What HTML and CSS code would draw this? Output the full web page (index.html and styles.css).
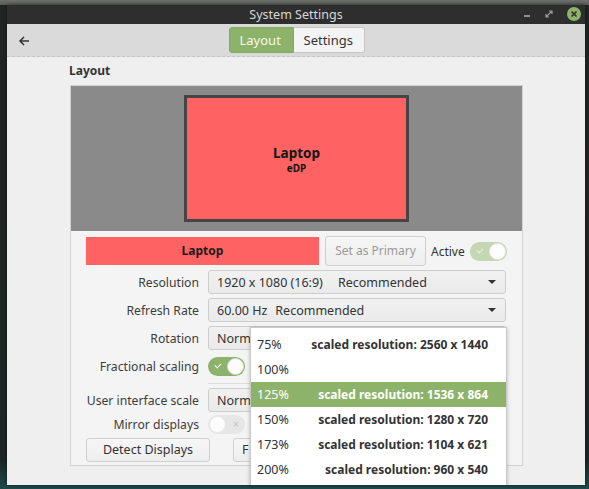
FILE: index.html
```html
<!DOCTYPE html>
<html lang="en">
<head>
    <meta charset="UTF-8">
    <title>System Settings</title>
    <link rel="stylesheet" href="styles.css">
</head>
<body>
    <div class="window">
        <div class="titlebar">
            <span class="title">System Settings</span>
            <div class="controls">
                <svg width="10" height="10" viewBox="0 0 10 10"><path d="M2 7h6" stroke="#b5b5b5" stroke-width="1.5"/></svg>
                <svg width="10" height="10" viewBox="0 0 10 10"><path d="M2 8l6-6M5 2h3v3M2 5v3h3" stroke="#9a9a9a" stroke-width="1.2" fill="none"/></svg>
                <svg width="16" height="16" viewBox="0 0 16 16"><circle cx="8" cy="8" r="7" fill="#8db36a"/><path d="M5.5 5.5l5 5M10.5 5.5l-5 5" stroke="#2d2d2d" stroke-width="1.6"/></svg>
            </div>
        </div>

        <div class="toolbar">
            <span class="back">
                <svg width="12" height="12" viewBox="0 0 12 12"><path d="M11 6H2M6 2L2 6l4 4" stroke="#333" stroke-width="1.5" fill="none"/></svg>
            </span>
            <div class="switcher">
                <span class="tab active">Layout</span>
                <span class="tab">Settings</span>
            </div>
        </div>

        <div class="content">
            <div class="heading">Layout</div>
            <div class="frame">
                <div class="canvas">
                    <div class="monitor">
                        <span class="mon-name">Laptop</span>
                        <span class="mon-port">eDP</span>
                    </div>
                </div>

                <div class="panel">
                    <div class="top-row">
                        <div class="name-bar">Laptop</div>
                        <span class="btn primary-btn">Set as Primary</span>
                        <span class="active-label">Active</span>
                        <span class="switch on dim"><span class="knob"></span></span>
                    </div>

                    <div class="row">
                        <span class="label">Resolution</span>
                        <div class="combo"><span>1920 x 1080 (16:9)</span><span class="rec wide">Recommended</span></div>
                    </div>
                    <div class="row">
                        <span class="label">Refresh Rate</span>
                        <div class="combo"><span>60.00 Hz</span><span class="rec">Recommended</span></div>
                    </div>
                    <div class="row">
                        <span class="label">Rotation</span>
                        <div class="combo"><span>Norm.</span></div>
                    </div>
                    <div class="row">
                        <span class="label">Fractional scaling</span>
                        <span class="switch on"><span class="knob"></span></span>
                    </div>
                    <div class="row sep-row">
                        <span class="label"></span>
                        <div class="separator"></div>
                    </div>
                    <div class="row">
                        <span class="label">User interface scale</span>
                        <div class="combo"><span>Norm.</span></div>
                    </div>
                    <div class="row short">
                        <span class="label">Mirror displays</span>
                        <span class="switch off"><span class="knob"></span></span>
                    </div>
                    <div class="buttons">
                        <span class="btn detect">Detect Displays</span>
                        <span class="btn fixed">F</span>
                    </div>
                </div>
            </div>
        </div>

        <ul class="menu">
            <li><span>75%</span><b>scaled resolution: 2560 x 1440</b></li>
            <li><span>100%</span></li>
            <li class="selected"><span>125%</span><b>scaled resolution: 1536 x 864</b></li>
            <li><span>150%</span><b>scaled resolution: 1280 x 720</b></li>
            <li><span>173%</span><b>scaled resolution: 1104 x 621</b></li>
            <li><span>200%</span><b>scaled resolution: 960 x 540</b></li>
        </ul>
    </div>
</body>
</html>
```

FILE: styles.css
```css
body {
    margin: 0;
    width: 589px;
    height: 489px;
    overflow: hidden;
    font-family: "Noto Sans", "DejaVu Sans", sans-serif;
    font-size: 12px;
    color: #3a3a3a;
    background: linear-gradient(to bottom, #6f716e 0, #5a5c59 5px, #202624 5px, #1c2725 460px, #1f4a4c 100%);
}

.window {
    position: relative;
    margin: 5px 0 0 7px;
    width: 578px;
    height: 480px;
    background-color: #efefef;
    box-shadow: 0 0 4px rgba(0, 0, 0, 0.5);
    overflow: hidden;
}

.titlebar {
    height: 19px;
    background-color: #2e2e2e;
    color: #d8d8d8;
    font-size: 12.5px;
    display: flex;
    align-items: center;
    justify-content: center;
    position: relative;
}

.controls {
    position: absolute;
    right: 3px;
    top: 1px;
    display: flex;
    align-items: center;
    gap: 12px;
}

.toolbar {
    height: 32px;
    background-color: #dadada;
    border-bottom: 1px dashed #c4c4c4;
    display: flex;
    align-items: center;
    justify-content: center;
    position: relative;
}

.back {
    position: absolute;
    left: 11px;
    top: 10px;
}

.switcher {
    display: flex;
    margin-left: 1px;
}

.tab {
    height: 24px;
    line-height: 24px;
    padding: 0 10px;
    font-size: 13px;
    border: 1px solid #c8c8c8;
    background-color: #f4f4f4;
    color: #333;
}

.tab.active {
    background-color: #8db36a;
    border-color: #84a962;
    color: #f5f9f0;
    border-radius: 3px 0 0 3px;
    width: 43px;
}

.tab:last-child {
    border-left: none;
    border-radius: 0 3px 3px 0;
    width: 50px;
}

.content {
    padding: 6px 62px 0 63px;
}

.heading {
    font-weight: bold;
    font-size: 12px;
    color: #333;
    line-height: 16px;
    margin-left: -1px;
}

.frame {
    margin-top: 6px;
    width: 451px;
    border: 1px solid #d2d2d2;
    background-color: #f4f4f4;
}

.canvas {
    height: 145px;
    background-color: #8a8a8a;
    display: flex;
    align-items: center;
    justify-content: center;
}

.monitor {
    width: 219px;
    height: 121px;
    border: 3px solid #454545;
    background-color: #fe6262;
    display: flex;
    flex-direction: column;
    align-items: center;
    justify-content: center;
    color: #151515;
    font-weight: bold;
}

.mon-name {
    display: block;
    font-size: 13.5px;
    line-height: 18px;
    margin-top: 2px;
}

.mon-port {
    display: block;
    font-size: 10px;
    line-height: 13px;
}

.panel {
    padding: 5px 15px 3px 15px;
}

.top-row {
    display: flex;
    align-items: center;
    height: 30px;
}

.name-bar {
    width: 233px;
    height: 28px;
    line-height: 28px;
    background-color: #fe6262;
    text-align: center;
    font-weight: bold;
    color: #1c1c1c;
}

.btn {
    display: inline-block;
    box-sizing: border-box;
    border: 1px solid #cfcfcf;
    border-radius: 3px;
    background: linear-gradient(#f6f6f6, #eeeeee);
    text-align: center;
}

.primary-btn {
    width: 101px;
    height: 30px;
    line-height: 28px;
    margin-left: 6px;
    color: #9a9a9a;
}

.active-label {
    margin-left: 5px;
    color: #333;
}

.switch {
    position: relative;
    display: inline-block;
    width: 37px;
    height: 19px;
    border-radius: 10px;
    box-sizing: border-box;
}

.top-row .switch {
    margin-left: 5px;
}

.switch.on {
    background-color: #8db36a;
}

.switch.on::before {
    content: "";
    position: absolute;
    left: 7px;
    top: 6px;
    width: 5px;
    height: 3px;
    border-left: 1.5px solid #fff;
    border-bottom: 1.5px solid #fff;
    transform: rotate(-45deg);
}

.switch.dim {
    background-color: #c5d6b2;
}

.switch.dim::before {
    border-color: #e9f0e1;
}

.switch.off {
    background-color: #e6e6e6;
}

.switch.off::before {
    content: "\00d7";
    position: absolute;
    right: 6px;
    top: 1px;
    font-size: 11px;
    line-height: 16px;
    color: #c4c4c4;
}

.knob {
    position: absolute;
    top: 1px;
    right: 1px;
    width: 17px;
    height: 17px;
    border-radius: 50%;
    background-color: #fdfdfd;
    box-sizing: border-box;
    border: 1px solid #d9d9d9;
}

.switch.dim .knob {
    border-color: #e6e6e6;
}

.switch.off .knob {
    left: 1px;
    right: auto;
    border-color: #e8e8e8;
}

.row {
    display: flex;
    align-items: center;
    height: 24px;
    margin-top: 4px;
}

.row .label {
    width: 113px;
    flex-shrink: 0;
    text-align: right;
    white-space: nowrap;
    margin-right: 9px;
    color: #3c3c3c;
    font-size: 12.2px;
}

.combo {
    box-sizing: border-box;
    width: 298px;
    height: 24px;
    border: 1px solid #cdcdcd;
    border-radius: 3px;
    background: linear-gradient(#f1f1f1, #eaeaea);
    display: flex;
    align-items: center;
    padding-left: 8px;
    position: relative;
    color: #333;
    font-size: 12.5px;
}

.combo::after {
    content: "";
    position: absolute;
    right: 9px;
    top: 9px;
    border-left: 4px solid transparent;
    border-right: 4px solid transparent;
    border-top: 4px solid #333;
}

.rec {
    margin-left: 8px;
}

.rec.wide {
    margin-left: 15px;
}

.row.sep-row {
    height: 1px;
    margin-top: 5px;
}

.separator {
    height: 1px;
    width: 298px;
    background-color: #dcdcdc;
}

.row.short {
    height: 20px;
    margin-top: 2px;
}

.buttons {
    display: flex;
    margin-top: 4px;
    height: 24px;
}

.detect {
    width: 124px;
    height: 24px;
    line-height: 22px;
    font-size: 12.5px;
    color: #333;
}

.fixed {
    margin-left: 23px;
    width: 124px;
    height: 24px;
    line-height: 22px;
    text-align: left;
    padding-left: 8px;
    font-size: 12.5px;
    color: #333;
}

.menu {
    position: absolute;
    left: 243px;
    top: 322px;
    width: 257px;
    height: 162px;
    margin: 0;
    padding: 4px 0 0 0;
    box-sizing: border-box;
    list-style: none;
    background-color: #fff;
    border: 1px solid #c9c9c9;
    box-shadow: 0 1px 4px rgba(0, 0, 0, 0.25);
}

.menu li {
    display: flex;
    justify-content: space-between;
    align-items: center;
    height: 25px;
    padding: 0 18px 0 6px;
    color: #333;
    font-size: 12.5px;
}

.menu li b {
    font-size: 12px;
}

.menu li.selected {
    background-color: #8db36a;
    color: #fff;
}
```
